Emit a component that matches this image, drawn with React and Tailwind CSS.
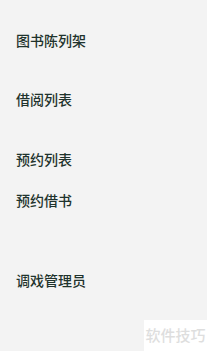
export default function App() {
  const item = "h-5 leading-5 text-[14px] font-medium text-[#1f332d]";
  return (
    <div className="relative w-[207px] h-[351px] bg-[#f3f3f3] overflow-hidden" style={{ fontFamily: '"Noto Sans CJK SC", sans-serif' }}>
      <div className="flex flex-col pl-4 pt-[30px]">
        <div className={item}>图书陈列架</div>
        <div className={item + " mt-[39px]"}>借阅列表</div>
        <div className={item + " mt-[40px]"}>预约列表</div>
        <div className={item + " mt-[21px]"}>预约借书</div>
        <div className={item + " mt-[60px]"}>调戏管理员</div>
      </div>
      <div className="absolute left-[144px] top-[320px] w-[63px] h-[31px] bg-white flex items-center justify-center text-[15px] font-medium text-[#dedede]">
        软件技巧
      </div>
    </div>
  );
}
